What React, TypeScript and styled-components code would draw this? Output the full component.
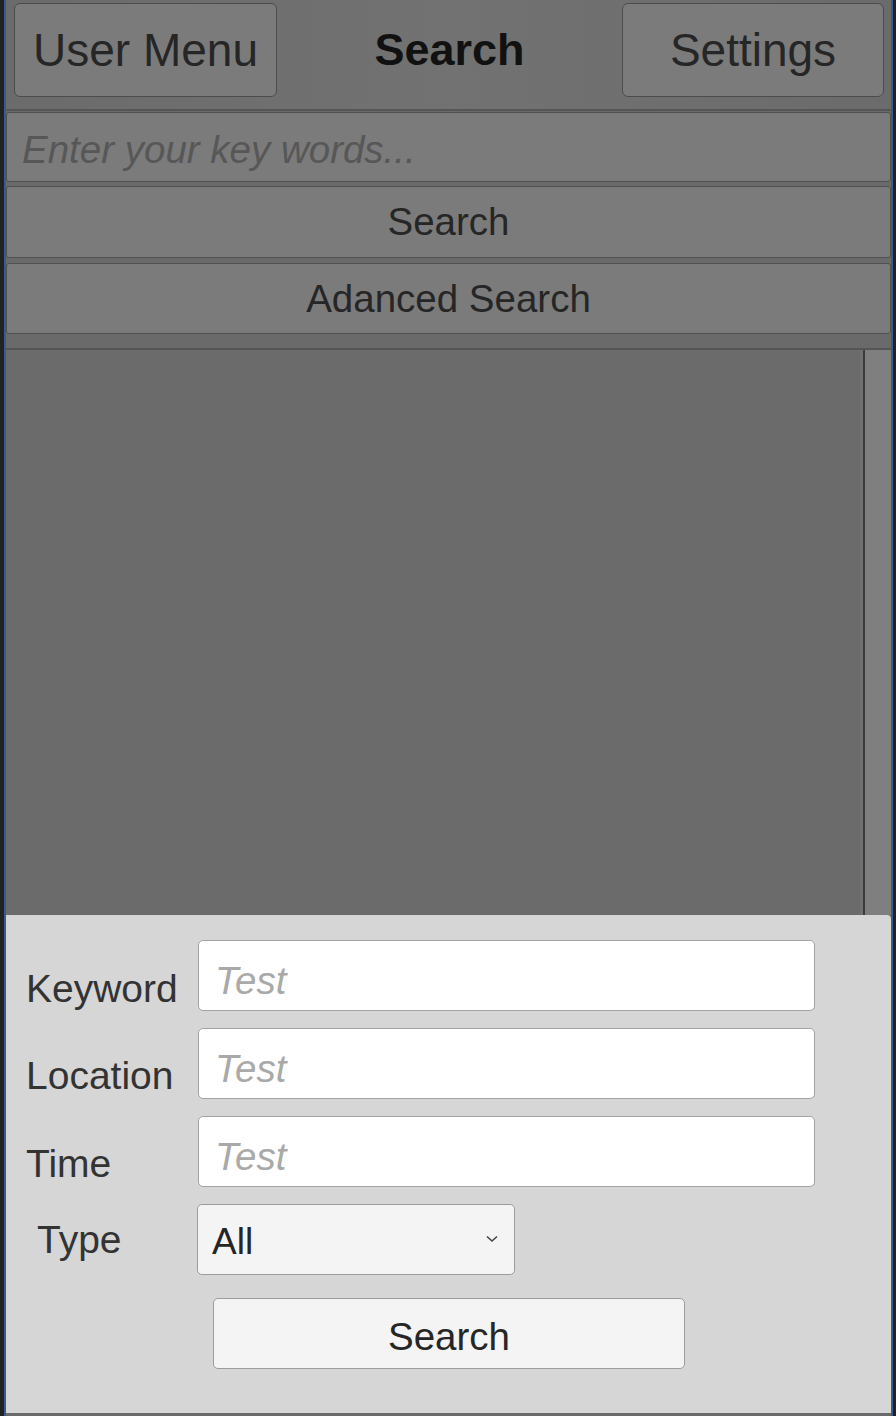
import React from "react";
import styled, { createGlobalStyle } from "styled-components";

const GlobalStyle = createGlobalStyle`
  html, body {
    margin: 0;
    padding: 0;
    background: #202226;
  }
  * {
    box-sizing: border-box;
  }
`;

const Frame = styled.div`
  width: 896px;
  height: 1416px;
  display: flex;
  border-left: 4px solid #212226;
  border-right: 3px solid #212226;
  background: #212226;
`;

const Window = styled.div`
  flex: 1;
  display: flex;
  flex-direction: column;
  border-left: 2px solid #3b5b86;
  border-right: 2px solid #3b5b86;
  background: #6a6a6a;
  overflow: hidden;
  font-family: "Liberation Sans", Arial, sans-serif;
`;

const Header = styled.div`
  height: 111px;
  display: grid;
  grid-template-columns: 263px 1fr 262px;
  align-items: start;
  padding: 3px 7px 0 8px;
  background: linear-gradient(90deg, #6b6b6b 0%, #727272 50%, #6b6b6b 100%);
  border-bottom: 2px solid #555555;
`;

const HeaderButton = styled.button`
  height: 94px;
  background: #7b7b7b;
  border: 1.5px solid #4c4c4c;
  border-radius: 6px;
  color: #262626;
  font-family: inherit;
  font-size: 46px;
  padding: 0;
  cursor: pointer;
`;

const Title = styled.div`
  height: 94px;
  display: flex;
  align-items: center;
  justify-content: center;
  font-size: 45px;
  font-weight: bold;
  color: #111111;
`;

const Bar = styled.div`
  display: flex;
  flex-direction: column;
  padding-top: 1px;
`;

const KeywordField = styled.input`
  height: 70px;
  width: 100%;
  background: #7b7b7b;
  border: 1.5px solid #505050;
  border-radius: 3px;
  padding: 6px 0 0 15px;
  font-family: inherit;
  font-size: 38.5px;
  color: #222;
  outline: none;

  &::placeholder {
    color: #575757;
    font-style: italic;
  }
`;

const BarButton = styled.button<{ $h: number; $gap: number }>`
  height: ${(p) => p.$h}px;
  margin-top: ${(p) => p.$gap}px;
  width: 100%;
  background: #7b7b7b;
  border: 1.5px solid #505050;
  border-radius: 3px;
  color: #262626;
  font-family: inherit;
  font-size: 38.5px;
  padding: 0;
  cursor: pointer;
`;

const ScrollArea = styled.div`
  margin-top: 14px;
  height: 567px;
  display: flex;
  border-top: 2px solid #555555;
`;

const Viewport = styled.div`
  flex: 1;
  background: #6b6b6b;
  border-right: 3px solid #707070;
`;

const Scrollbar = styled.div`
  width: 28px;
  background: #7f7f7f;
  border-left: 2px solid #3c3c3c;
`;

const Panel = styled.div`
  flex: 1;
  margin-bottom: 3px;
  background: #d6d6d6;
  border-radius: 0 4px 0 0;
  padding: 25px 0 0 20px;
  display: flex;
  flex-direction: column;
`;

const FormGrid = styled.div`
  display: grid;
  grid-template-columns: 172px 617px;
  grid-auto-rows: 71px;
  row-gap: 17px;
`;

const Label = styled.label<{ $shift: number; $indent?: number }>`
  font-size: 39px;
  color: #333333;
  line-height: 71px;
  padding-top: ${(p) => p.$shift}px;
  padding-left: ${(p) => p.$indent || 0}px;
  white-space: nowrap;
`;

const TextField = styled.input`
  height: 71px;
  width: 100%;
  background: #ffffff;
  border: 1.5px solid #a2a2a2;
  border-radius: 5px;
  padding: 10px 0 0 16px;
  font-family: inherit;
  font-size: 38.5px;
  color: #222;
  outline: none;

  &::placeholder {
    color: #a9a9a9;
    font-style: italic;
  }
`;

const SelectWrap = styled.div`
  position: relative;
  width: 318px;
  height: 71px;
  margin-left: -1px;
`;

const Select = styled.select`
  appearance: none;
  width: 100%;
  height: 100%;
  background: #f4f4f4;
  border: 1.5px solid #9c9c9c;
  border-radius: 5px;
  padding: 4px 0 0 14px;
  font-family: inherit;
  font-size: 37px;
  color: #262626;
  outline: none;
`;

const Chevron = styled.svg`
  position: absolute;
  right: 17px;
  top: 31px;
  pointer-events: none;
`;

const SubmitRow = styled.div`
  padding: 23px 0 0 187px;
`;

const SubmitButton = styled.button`
  width: 472px;
  height: 71px;
  background: #f4f4f4;
  border: 1.5px solid #9c9c9c;
  border-radius: 5px;
  padding: 6px 0 0;
  font-family: inherit;
  font-size: 38.5px;
  color: #262626;
  cursor: pointer;
`;

const fields = [
  { label: "Keyword", shift: 13 },
  { label: "Location", shift: 12 },
  { label: "Time", shift: 12 },
];

export default function App() {
  return (
    <>
      <GlobalStyle />
      <Frame>
        <Window>
          <Header>
            <HeaderButton>User Menu</HeaderButton>
            <Title>Search</Title>
            <HeaderButton>Settings</HeaderButton>
          </Header>
          <Bar>
            <KeywordField placeholder="Enter your key words..." />
            <BarButton $h={72} $gap={4}>
              Search
            </BarButton>
            <BarButton $h={71} $gap={5}>
              Adanced Search
            </BarButton>
          </Bar>
          <ScrollArea>
            <Viewport />
            <Scrollbar />
          </ScrollArea>
          <Panel>
            <FormGrid>
              {fields.map((f) => (
                <React.Fragment key={f.label}>
                  <Label $shift={f.shift}>{f.label}</Label>
                  <TextField placeholder="Test" />
                </React.Fragment>
              ))}
              <Label $shift={0} $indent={11}>
                Type
              </Label>
              <SelectWrap>
                <Select defaultValue="All">
                  <option>All</option>
                  <option>Event</option>
                  <option>Place</option>
                </Select>
                <Chevron width="12" height="8" viewBox="0 0 12 8">
                  <path d="M1 1.5 L6 6 L11 1.5" fill="none" stroke="#444" strokeWidth="1.6" />
                </Chevron>
              </SelectWrap>
            </FormGrid>
            <SubmitRow>
              <SubmitButton>Search</SubmitButton>
            </SubmitRow>
          </Panel>
        </Window>
      </Frame>
    </>
  );
}
